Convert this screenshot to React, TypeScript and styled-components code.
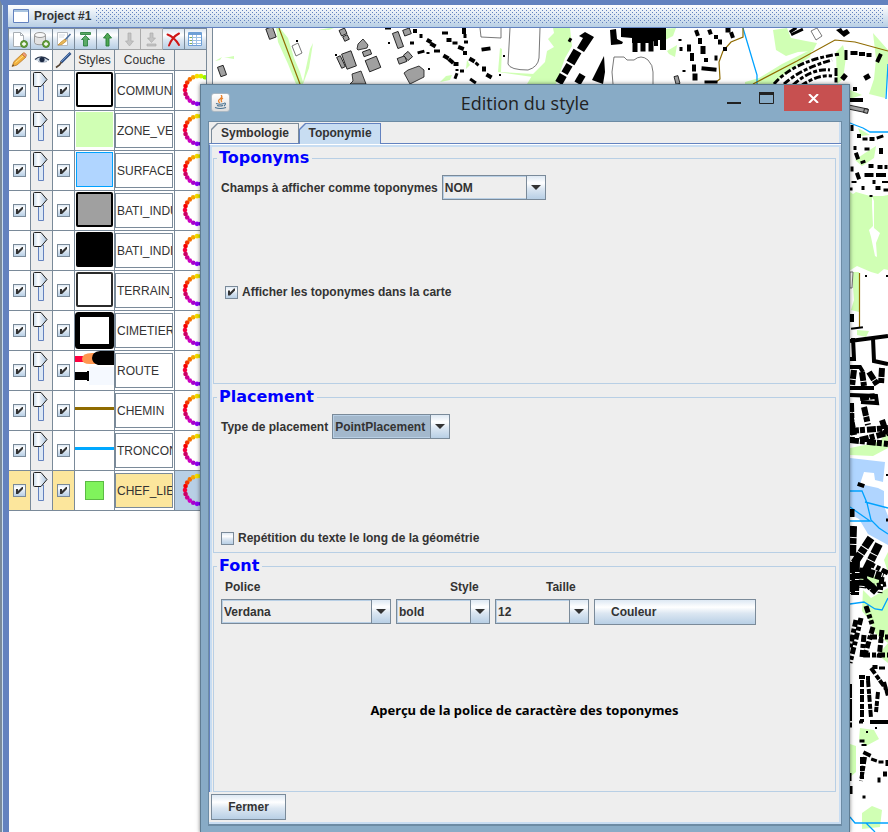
import React from "react";
import styled, { createGlobalStyle } from "styled-components";

const line = "#7a8a99";
const blue = "#6382bf";
const ink = "#333333";
const panel = "#eeeeee";
const metal = "linear-gradient(#dde8f3 0%, #ffffff 30%, #dce7f2 55%, #b8cfe5 100%)";

const GlobalStyle = createGlobalStyle`
  * { box-sizing: border-box; }
  body {
    margin: 0;
    background: ${blue};
    color: ${ink};
    font: 12px/16px "Liberation Sans", Arial, sans-serif;
  }
  button, select, input { font: inherit; color: inherit; margin: 0; }
`;

/* ---------- project window ---------- */

const ProjectWindow = styled.main`
  position: relative;
  display: flex;
  flex-direction: column;
  min-height: 100vh;
  overflow: hidden;
  border-top: 5px solid ${blue};
  border-left: 2px solid ${line};
  background: #ffffff;
  box-shadow: inset 1px 0 #c8ddf2, inset 7px 0 ${blue};
  padding-left: 6px;
`;

const TitleBar = styled.header`
  display: flex;
  align-items: center;
  gap: 5px;
  height: 23px;
  padding: 0 5px;
  background: linear-gradient(#ffffff, #b8cfe5);
  border-bottom: 1px solid ${blue};
`;

const ProjectTitle = styled.h1`
  margin: 0;
  font-size: 12px;
  line-height: 16px;
`;

const Bumps = styled.div`
  flex: 1;
  height: 16px;
  background-image: conic-gradient(from 0deg at 1px 1px, transparent 270deg, ${blue} 0),
    conic-gradient(from 0deg at 1px 1px, transparent 270deg, ${blue} 0);
  background-size: 4px 4px;
  background-position: 0 0, 2px 2px;
`;

const Workspace = styled.div`
  flex: 1;
  display: grid;
  grid-template-columns: 199px 6px minmax(0, 1fr);
`;

const LayerPanel = styled.section`
  min-width: 0;
  overflow: hidden;
`;

const Divider = styled.div`
  background: ${panel};
  border-right: 1px solid ${line};
`;

const MapArea = styled.div`
  position: relative;
  overflow: hidden;
  & > svg { position: absolute; inset: 0; width: 100%; height: 100%; display: block; }
`;

const Toolbar = styled.div`
  display: grid;
  grid-template-columns: repeat(9, 22px);
  border-left: 1px solid ${line};
  height: 22px;
`;

const ToolButton = styled.button`
  display: grid;
  place-items: center;
  padding: 0;
  border: 1px solid ${line};
  border-left: 0;
  background: ${metal};
  &:disabled { background: #e4e4e4; border-color: #aaaaaa; }
`;

const Layers = styled.table`
  table-layout: fixed;
  width: 199px;
  border-collapse: separate;
  border-spacing: 0;
  border-left: 1px solid ${blue};
  th, td { padding: 0; border-right: 1px solid ${line}; border-bottom: 1px solid ${line}; overflow: hidden; }
  th { height: 21px; background: ${panel}; font-weight: normal; }
  td { height: 40px; }
  svg { display: block; }
`;

const HeadIcon = styled.div<{ $white?: boolean }>`
  display: grid;
  place-items: center;
  height: 20px;
  background: ${(p) => (p.$white ? "#ffffff" : "transparent")};
`;

const Cell = styled.td<{ $tone?: "gold" | "blue" | "grey" }>`
  background: ${(p) =>
    p.$tone === "gold" ? "#fce69c" : p.$tone === "blue" ? "#b8cfe5" : p.$tone === "grey" ? panel : "#ffffff"};
`;

const Centered = styled.div`
  display: grid;
  place-items: center;
`;

const LayerName = styled.div<{ $selected?: boolean }>`
  height: 35px;
  margin: 0 1px 0 0;
  padding-left: 1px;
  line-height: 34px;
  overflow: hidden;
  white-space: nowrap;
  border: 1px solid ${line};
  background: ${(p) => (p.$selected ? "#fce69c" : "#ffffff")};
`;

const Check = styled.input.attrs({ type: "checkbox" })`
  appearance: none;
  display: block;
  flex: none;
  width: 13px;
  height: 13px;
  border: 1px solid ${line};
  background: ${metal};
  &:checked::before {
    content: "";
    display: block;
    width: 11px;
    height: 11px;
    background: ${ink};
    clip-path: polygon(2px 4px, 4px 4px, 4px 6px, 8px 2px, 9px 2px, 9px 4px, 4px 9px, 2px 9px);
  }
`;

/* ---------- dialog ---------- */

const Dialog = styled.section`
  position: absolute;
  left: 198px;
  right: 38px;
  top: 79px;
  min-height: calc(100% - 79px);
  padding: 0 7px 7px;
  background: #88abc6;
  border: 1px solid #5f7c92;
  border-bottom: 0;
  box-shadow: 0 0 4px rgba(0, 0, 0, 0.5);
`;

const DialogTitle = styled.header`
  display: grid;
  grid-template-columns: 122px 1fr 122px;
  height: 36px;
`;

const JavaIcon = styled.div`
  display: grid;
  place-items: center;
  width: 19px;
  height: 19px;
  margin: 8px 0 0 3px;
  border: 1px solid #a9b8c4;
  border-radius: 3px;
  background: linear-gradient(#ffffff, #dddddd);
`;

const Heading = styled.h2`
  margin: 0;
  text-align: center;
  font: 18px/36px "Open Sans", "Noto Sans", sans-serif;
  color: #222222;
`;

const WindowButtons = styled.div`
  display: grid;
  grid-template-columns: 28px 36px 58px;
  height: 26px;
`;

const WindowButton = styled.button<{ $close?: boolean }>`
  display: grid;
  place-items: center;
  padding: 0;
  border: 0;
  background: ${(p) => (p.$close ? "#c75050" : "transparent")};
`;

const DialogBody = styled.div`
  background: ${panel};
  border: 1px solid #6c8ba4;
  border-bottom-width: 2px;
  box-shadow: inset -2px -2px #c8ddf2;
  padding: 1px 0 4px;
`;

const Tabs = styled.div`
  display: flex;
  align-items: flex-end;
  height: 21px;
  padding-left: 2px;
  border-bottom: 1px solid ${blue};
`;

const Tab = styled.button<{ $active?: boolean }>`
  position: relative;
  height: ${(p) => (p.$active ? 21 : 20)}px;
  width: ${(p) => (p.$active ? 82 : 88)}px;
  margin-bottom: ${(p) => (p.$active ? -1 : 0)}px;
  padding: 0;
  border: 0;
  font-weight: bold;
  line-height: 19px;
  background: ${(p) => (p.$active ? blue : line)};
  clip-path: polygon(0 6px, 6px 0, 100% 0, 100% 100%, 0 100%);
  z-index: 0;
  &::before {
    content: "";
    position: absolute;
    z-index: -1;
    inset: 1px 1px 0 1px;
    background: ${(p) => (p.$active ? "#c8ddf2" : panel)};
    clip-path: polygon(0 6px, 6px 0, 100% 0, 100% 100%, 0 100%);
  }
`;

const TabPanel = styled.form`
  border-top: 1px solid #ffffff;
  border-left: 1px solid ${blue};
  box-shadow: inset 2px 2px #c8ddf2;
  padding: 4px 5px 0 3px;
`;

const Group = styled.fieldset<{ $tall?: boolean }>`
  display: flex;
  flex-direction: column;
  min-width: 0;
  margin: 0;
  height: ${(p) => (p.$tall ? 235 : 165)}px;
  margin-bottom: 4px;
  padding: 0 7px 7px;
  border: 1px solid #b8cfe5;
`;

const GroupTitle = styled.legend`
  padding: 0 3px 0 2px;
  margin-left: -4px;
  color: #0000ff;
  font: bold 16px/18px "DejaVu Sans", sans-serif;
`;

const Field = styled.div<{ $push?: number; $indent?: number }>`
  display: flex;
  align-items: center;
  gap: 4px;
  font-weight: bold;
  margin-top: ${(p) => p.$push ?? 8}px;
  margin-left: ${(p) => p.$indent ?? 0}px;
`;

const Caption = styled.label`
  white-space: nowrap;
`;

const Combo = styled.span<{ $w: number }>`
  display: inline-grid;
  grid-template-columns: 1fr 20px;
  width: ${(p) => p.$w}px;
  height: 25px;
`;

const Select = styled.select<{ $dark?: boolean }>`
  grid-area: 1 / 1 / 2 / 3;
  appearance: none;
  width: 100%;
  padding: 0 20px 0 2px;
  border: 1px solid ${line};
  border-radius: 0;
  outline: 0;
  font-weight: bold;
  background: ${(p) => (p.$dark ? "#a3b8cc" : panel)};
  box-shadow: inset 1px 1px #b8cfe5, inset 0 -1px #b8cfe5;
`;

const Arrow = styled.span`
  grid-area: 1 / 2;
  display: grid;
  place-items: center;
  border: 1px solid ${line};
  background: ${metal};
  pointer-events: none;
`;

const FontGrid = styled.div`
  display: grid;
  grid-template-columns: 170px 94px 94px 162px;
  column-gap: 5px;
  row-gap: 4px;
  font-weight: bold;
  margin-top: 4px;
`;

const FontLabel = styled.label<{ $pad: number }>`
  padding-left: ${(p) => p.$pad}px;
`;

const PushButton = styled.button<{ $w: number; $left?: boolean }>`
  width: ${(p) => p.$w}px;
  height: 26px;
  padding: 0 16px;
  border: 1px solid ${line};
  background: ${metal};
  font-weight: bold;
  text-align: ${(p) => (p.$left ? "left" : "center")};
`;

const Preview = styled.p`
  flex: 1;
  display: grid;
  place-items: center;
  margin: 0;
  padding-top: 10px;
  color: #000000;
  font: bold 13px/16px "Noto Sans", "Open Sans", sans-serif;
`;

const Footer = styled.footer`
  padding: 0 2px;
  margin-top: -2px;
`;

/* ---------- icons ---------- */

const Plus = () => (
  <g>
    <circle cx="13" cy="13" r="3.5" fill="#6da544" stroke="#3f7a1c" strokeWidth="0.8" />
    <path d="M11 13h4M13 11v4" stroke="#fff" strokeWidth="1.3" />
  </g>
);

const toolIcons: { name: string; off?: boolean; art: React.ReactNode }[] = [
  {
    name: "Nouvelle couche",
    art: (
      <>
        <path d="M2.500 1.500h7l3 3v11h-10z" fill="#fff" stroke="#a9afb5" />
        <path d="M9.500 1.500v3h3" fill="none" stroke="#a9afb5" />
        <Plus />
      </>
    ),
  },
  {
    name: "Ajouter une base",
    art: (
      <>
        <path d="M1.500 4v7.500c0 3 11 3 11 0V4" fill="#e2e2e2" stroke="#999" />
        <ellipse cx="7" cy="4" rx="5.500" ry="2.500" fill="#f8f8f8" stroke="#999" />
        <Plus />
      </>
    ),
  },
  {
    name: "Modifier",
    art: (
      <>
        <path d="M2.500 1.500h10v13h-10z" fill="#fff" stroke="#b3b9c0" />
        <path d="M4 4h6M4 6h5" stroke="#d5dce3" />
        <path d="M15.500 3 10 9" stroke="#4c6f9f" strokeWidth="1.600" />
        <path d="M10 8 6 11l-3 3 4-.5 4.500-3.500z" fill="#e9b95a" stroke="#b67c1d" strokeWidth="0.600" />
      </>
    ),
  },
  { name: "Tout en haut", art: <path d="M3.500 1.500h10v2h-10zM8.500 4.500l4 4h-2V15h-4V8.500h-2z" fill="#5aaa66" stroke="#217a36" strokeWidth="0.800" /> },
  { name: "Monter", art: <path d="M8.500 2 12.500 7h-2.500v8h-3V7H4.500z" fill="#4fa653" stroke="#217a36" strokeWidth="0.900" /> },
  { name: "Descendre", off: true, art: <path d="M8.500 15 4.500 10H7V2h3v8h2.500z" fill="#c4c4c4" stroke="#adadad" strokeWidth="0.700" /> },
  { name: "Tout en bas", off: true, art: <path d="M8.500 11.500 4.500 7H7V2h3v5h2.500zM4 13h9v2H4z" fill="#c4c4c4" stroke="#adadad" strokeWidth="0.700" /> },
  { name: "Supprimer", art: <path d="M2.500 3.500C7 5 11 9 14 14M14 2.500C9 5 6 9 4 14.500" fill="none" stroke="#cf1717" strokeWidth="2" strokeLinecap="round" /> },
  {
    name: "Attributs",
    art: (
      <>
        <path d="M1.500 1.500h13v13h-13z" fill="#fff" stroke="#6d9fd6" />
        <path d="M2 3h12" stroke="#6d9fd6" strokeWidth="2" />
        <path d="M2 6.500h12M2 9.500h12M2 12.500h12M5.500 4v10M9.500 4v10" stroke="#9cc0e4" />
        <path d="M3 6.500h2M3 9.500h2M3 12.500h2" stroke="#7fae55" />
      </>
    ),
  },
];

const Pencil = () => (
  <svg width="17" height="16" viewBox="0 0 17 16">
    <path d="M1 14.500 3 9.500 11 2l3.500 3.500L6 13z" fill="#f2b23e" stroke="#b9772a" strokeWidth="0.800" />
    <path d="m11 2 1-1c1.500-1 4 1.500 3.200 3l-.8 1.500z" fill="#ef9a7d" stroke="#b9772a" strokeWidth="0.700" />
    <path d="M4.500 10.500 12 4" stroke="#ffe38e" />
    <path d="m1 14.500 2-1-.8-1.200z" fill="#333" />
  </svg>
);

const Eye = () => (
  <svg width="16" height="12" viewBox="0 0 16 12">
    <path d="M1 6Q8 0 15 6.500 8 9.500 4 7z" fill="#cfdbe8" />
    <path d="M1 5.500Q7 0 15 6" fill="none" stroke="#2d3a50" strokeWidth="1.300" />
    <path d="M4 7.500Q8 9.500 13 7.500" fill="none" stroke="#8a96a6" strokeWidth="0.800" />
    <circle cx="8" cy="5.500" r="2.600" fill="#1c2a44" />
  </svg>
);

const Brush = () => (
  <svg width="17" height="17" viewBox="0 0 17 17">
    <path d="M15.500 1 6 10.500" stroke="#2c4f86" strokeWidth="2.600" />
    <path d="M14.500 1.500 6 10" stroke="#7ca4d8" strokeWidth="0.800" />
    <path d="m6.500 10-2 3L1 15.500" fill="none" stroke="#544334" strokeWidth="1.600" />
  </svg>
);

const Slider = () => (
  <svg width="21" height="39" viewBox="0 0 21 39" role="img" aria-label="Opacité">
    <defs>
      <linearGradient id="thumb">
        <stop offset="0" stopColor="#c8daea" />
        <stop offset="0.350" stopColor="#fff" />
        <stop offset="1" stopColor="#a9c4df" />
      </linearGradient>
    </defs>
    <path d="M7.500 14h5v15.500h-5z" fill="#dce8f4" stroke={blue} />
    <path d="M2.500 2.500q0-1 1-1h6.500l6 7-6 7H3.500q-1 0-1-1z" fill="url(#thumb)" stroke="#222" />
  </svg>
);

const Ring = () => (
  <svg width="31" height="39" viewBox="0 0 31 39" aria-hidden="true">
    {Array.from({ length: 22 }, (_, i) => {
      const turn = i < 11 ? i : i - 22;
      const a = Math.PI + (turn * Math.PI) / 11;
      return (
        <circle
          key={i}
          cx={24 + 14 * Math.cos(a)}
          cy={19 + 14 * Math.sin(a)}
          r="2.300"
          fill={`hsl(${345 + turn * 14},100%,${turn < 0 && turn > -5 ? 40 : 48}%)`}
        />
      );
    })}
  </svg>
);

const box = (fill: string, stroke: string, w = 1) => (
  <rect x={1 + w / 2} y={1 + w / 2} width={37 - w} height={35 - w} rx={w > 1 ? 1 : 0} fill={fill} stroke={stroke} strokeWidth={w} />
);

const layers: { name: string; art: React.ReactNode; selected?: boolean }[] = [
  { name: "COMMUN", art: box("#fff", "#000", 2) },
  { name: "ZONE_VE", art: box("#d0ffb4", "#d0ffb4") },
  { name: "SURFACE", art: box("#b0d5ff", "#00a2ff") },
  { name: "BATI_INDU", art: box("#a0a0a0", "#000", 2) },
  { name: "BATI_INDI", art: box("#000", "#000", 2) },
  { name: "TERRAIN_", art: box("#fff", "#2b2b2b", 2) },
  { name: "CIMETIER", art: <rect x="2.500" y="3.500" width="34" height="32" rx="1" fill="#fff" stroke="#000" strokeWidth="5" /> },
  {
    name: "ROUTE",
    art: (
      <>
        <rect x="14" y="16" width="25" height="18" fill="#f5f9ff" />
        <path d="M0 5h12v6H0z" fill="#ff0040" />
        <path d="M7 8q0-6 10-6h8v11H15q-8 0-8-5z" fill="#ff964f" />
        <path d="M17 7q0-6 8-7h14v14H23q-6-2-6-7z" fill="#000" />
        <path d="M0 21h12v-1h2v10h-2v-1H0z" fill="#000" />
      </>
    ),
  },
  { name: "CHEMIN", art: <path d="M0 17.500h39" stroke="#8f6b00" strokeWidth="3" /> },
  { name: "TRONCON", art: <path d="M0 17.500h39" stroke="#00a8ff" strokeWidth="3" /> },
  { name: "CHEF_LIE", selected: true, art: <rect x="10.500" y="10.500" width="18" height="18" fill="#80f35c" stroke="#5cba45" /> },
];

/* ---------- map ---------- */

type Block = [number, number, number, number, number?];
const grey: Block[] = [
  [271, 33, 7, 11, -20], [222, 71, 6, 10, -20], [343, 32, 6, 6, -25], [346, 38, 5, 5, -25], [341, 62, 4, 12, -25],
  [349, 60, 10, 16, -20], [367, 53, 8, 5, -20], [373, 64, 12, 12, -22], [398, 40, 6, 16, -20], [407, 32, 7, 6, -20],
  [402, 60, 8, 6, -20], [408, 56, 6, 7, -40], [858, 109, 20, 4, 12], [866, 111, 4, 4, 12], [677, 80, 4, 8, -15],
];
const black: Block[] = [
  [297, 41, 2, 2], [336, 55, 2, 2], [429, 69, 2, 2], [388, 28, 6, 3], [389, 43, 2, 2], [412, 43, 4, 3], [415, 31, 4, 4],
  [421, 36, 3, 4], [421, 52, 7, 3, -15], [428, 53, 3, 2], [429, 41, 5, 4, 30], [433, 45, 6, 4, 30], [437, 51, 6, 3],
  [445, 33, 6, 3], [449, 40, 5, 4], [455, 43, 5, 3], [446, 57, 6, 4, 30], [451, 61, 6, 4, 40], [456, 64, 5, 4],
  [462, 71, 4, 3], [456, 76, 3, 6, 20], [457, 70, 3, 2], [473, 81, 7, 3, 35], [461, 48, 6, 4, 20], [465, 53, 4, 4],
  [466, 42, 4, 3], [465, 36, 3, 4], [464, 31, 4, 6], [472, 60, 6, 4, 30], [477, 64, 4, 3, 40], [484, 69, 4, 5],
  [489, 76, 6, 4, 30], [486, 49, 9, 4, -8], [504, 56, 2, 2], [500, 75, 2, 2],
  [574, 57, 9, 14, 30], [567, 69, 7, 10, 30], [561, 79, 8, 9, 30], [580, 79, 7, 10, 30], [570, 40, 3, 4, 30],
  [635, 46, 5, 12], [643, 46, 5, 11], [651, 46, 5, 11], [656, 42, 4, 8], [663, 45, 6, 10],
  [680, 40, 3, 2], [681, 49, 3, 4], [684, 71, 3, 2], [689, 48, 4, 7], [692, 57, 4, 8], [694, 68, 4, 7], [695, 77, 5, 7],
  [697, 33, 4, 6, -20], [700, 41, 4, 6], [703, 50, 5, 8], [706, 60, 4, 4], [710, 32, 4, 5, -20], [716, 37, 4, 4], [720, 42, 4, 5],
  [725, 49, 4, 4], [716, 58, 3, 5], [709, 69, 15, 4, 5], [711, 82, 13, 3], [728, 30, 5, 5], [732, 35, 4, 6, -20],
  [797, 32, 13, 3, -25], [793, 30, 8, 3, -35], [846, 55, 3, 10], [854, 53, 7, 4], [862, 54, 6, 4], [869, 55, 5, 4],
  [879, 58, 4, 9, 25], [867, 77, 6, 5, -30], [855, 89, 4, 4], [856, 100, 14, 4],
  [836, 72, 3, 8], [836, 80, 3, 5], [844, 77, 5, 6, 40],
  [852, 128, 3, 6], [859, 136, 4, 4], [865, 139, 5, 3], [872, 139, 5, 4], [880, 137, 7, 3, -20], [855, 148, 3, 4],
  [857, 156, 4, 7, -20], [863, 162, 5, 3, -20], [867, 149, 5, 3], [881, 151, 4, 6], [852, 169, 3, 5], [871, 166, 5, 4],
  [880, 167, 5, 4], [886, 167, 3, 4], [858, 176, 4, 7, -20], [869, 175, 9, 4], [881, 175, 10, 4], [854, 182, 5, 2],
  [874, 182, 3, 4], [885, 182, 6, 2], [863, 188, 3, 4], [878, 188, 5, 4], [886, 190, 5, 3], [851, 189, 3, 3], [871, 196, 3, 2],
  [866, 276, 2, 2], [887, 276, 2, 2], [852, 318, 4, 8], [857, 328, 12, 2, -8],
  [861, 485, 7, 4, 20], [852, 513, 5, 8], [887, 475, 2, 2], [887, 520, 2, 3],
  [850, 690, 4, 10], [850, 710, 4, 8], [850, 725, 4, 5], [850, 777, 3, 8], [851, 790, 3, 8],
  [862, 677, 6, 4], [868, 678, 4, 4], [875, 667, 5, 4], [882, 668, 6, 3], [867, 732, 2, 2], [876, 728, 2, 2],
  [862, 741, 5, 3], [864, 745, 5, 2], [867, 754, 8, 4, 25], [874, 760, 6, 3, 20], [881, 762, 5, 3], [887, 763, 3, 6],
  [885, 774, 4, 5], [879, 780, 3, 5], [864, 797, 3, 3], [861, 722, 4, 3], [879, 722, 18, 4],
];
const rows = [
  "M774 84Q795 60 840 54", "M784 84Q802 68 832 60", "M793 85Q812 68 830 70", "M801 86Q818 74 832 76",
];

const MapView = () => (
  <svg viewBox="213 28 675 804" preserveAspectRatio="xMinYMin slice" role="img" aria-label="Carte">
    <g fill="#d0ffb4">
      <path d="M276 28h4l8 10 6 20 6 14 3 10 7-33 3-6-4 25-6 16h-7l-8-20-10-22z" />
      <path d="m215 61 7-4-2 3zm9-3 10-2v3l-6-1zm94-28 17-3 4-1-10 4zm122 52 6-6 6-1-2 5zm27-22 3 5-4 4zM498 72l2-24 2 1-1 23 33 2-1 3z" />
      <path d="M553 28h17l2 18-7 12-9 26h-29l6-10 12-12 2-11 7-4-6-8 6-6z" />
      <path d="m663 29 13-1-3 8-8 4zm4 22 10-6-2 12-6-3zM773 30l14-2 4 10 15 3 11 2-4 8-15 1-12 4-10-6z" />
      <path d="m745 82 14-4 23-14 30-15-2 8-22 14-14 13h-29zm91-30 7-7 3 12-3 22-6 5zm37-19 15 17v22l-3 26-16-4 5-15 2-20zM850 90l12 5-12 4zm8 38 12 7-9 1zm7 25 11-7-2 12-12 8-7-6z" />
      <path d="m850 192 3 2 3-2 14 4h13l5-1v75l-4-1-6 5-7-2-14-6-8 5-7-7zm2 80h7v40l-8-2 3-10zm5 58 12 1-3 6-9-2zM850 448l20-4 10-3 8-10v17l-15 8-23-1z" />
      <path d="m863 590 8 8 17-10v55l-13-10-5-12-8-10zm0-23 10 8 8 5-6 8-15-8zM860 728l14 2 5 9-13 7-7-7zM850 744l6 2v26l-6 5zm12 69 10-7 10 4-2 17-18 2z" />
      <path d="m884 560 4-8v20zm-6 95 10 8v-20z" />
    </g>
    <path d="m872 196 2 5v27l6 5-4 10 1 14-2-1-4-19-2-7 4-4-1-20z" fill="#fff" />
    <path d="m850 458 35 4-2 20-8-2-1-7-10-1-4 12 18 4 6 3v15l6 15v25l-22-12-9-15-9-5z" fill="#b0d5ff" />
    <g fill="none" stroke="#00a2ff" strokeWidth="1.300">
      <path d="m743 28 14 47v9M888 64l-2 35M850 123l5 2 8 3 7 4h18M850 491h12l5 12 4 17 8 8 9 6M865 502l23 6M850 507l20 14h-20M850 604l14-2 11 7 7 1 6-12M850 817l5 6h33M866 823l9 9" />
    </g>
    <g fill="none" stroke="#8f6b00" strokeWidth="1.200">
      <path d="m279 28 21 56M743 28v9l-12 5-8 9-4 11 1 17-4 3M753 84l44-23 38-21 20 2 33 9M859.500 273v54" />
    </g>
    <g fill="#fff" stroke="#555" strokeWidth="0.800">
      <path d="m292 46 6-3 4 10-6 3zM480 28l1 9 20 1V28M510 28l-2 36q2 6 20 6 10-3 11-12l1-30M613 84l-1-12 2-15h10l3 3h7q7-6 14 0 5 5 5 12v12M811 31l6-3 5 8-6 4zM850 272h3l-1 16h-2z" />
    </g>
    <g fill="#a0a0a0" stroke="#111" strokeWidth="0.800">
      {grey.map(([x, y, w, h, r = 0], i) => (
        <rect key={i} x={x - w / 2} y={y - h / 2} width={w} height={h} transform={`rotate(${r} ${x} ${y})`} />
      ))}
      <path d="m357 49 1-5 5-5 5 6-1 3-9 2zM352 74l9-3 5 13h-16l3-3zM404 73l4-3 11-4 5 4v7l-14 7z" />
    </g>
    <g fill="#000">
      {black.map(([x, y, w, h, r = 0], i) => (
        <rect key={i} x={x - w / 2} y={y - h / 2} width={w} height={h} transform={`rotate(${r} ${x} ${y})`} />
      ))}
      <path d="m585 32 9 5-10 15-7-4 6-10-4-2zM604 56l-12 24 11 4 2-12zM610 30l6-1 1 10 6 3-1 2-11 1zM621 28h45v12h-10l-6 3h-18v-5l-11-1zM836 30l5-2 2 3 4-2 3 4-6 4z" />
    </g>
    <g fill="none" stroke="#000">
      {rows.map((d) => <path key={d} d={d} strokeWidth="3" strokeDasharray="7 2 4 2" />)}
      <path strokeWidth="4" d="M850 341l38-5M853 338l1 21h-4M873 338l1 23 14 3M850 367h10l3 5M850 388h24M850 395l26 1 1 7-16-1" />
      <path strokeWidth="6" strokeDasharray="9 1 5 2" d="M854 370l-2 16M862 372l2 14M869 372l9 14M882 368l-1 16M860 398l16-2M850 413l4 22M864 407l4 18M850 431l38-3M860 440l28-7M850 440l38 4M882 420l5 15M851 403l1 40" />
      <path strokeWidth="8" strokeDasharray="11 1 6 1" d="M871 538l-18 27M853 526l-1 30M879 544l-14 28M856 561l-1 34M864 571l19 6M863 580l14 12M851 562v32M864 568l-2 20" />
      <path strokeWidth="5" strokeDasharray="7 2 4 2" d="M888 573l-16-8M882 577l-2 16M868 587l18-3M866 606l6 18M861 618l-11 45M864 635l-2 22M873 627l-8 28M882 630l-3 28M863 655h25M870 637h18M856 620l-6 28" />
      <path strokeWidth="4" strokeDasharray="7 2 5 1" d="M862 680v42M868 680l3 38M871 668l17 24M878 692l-2 20M850 684v42M862 757v24M884 682l4 14M865 757l-4 24" />
    </g>
  </svg>
);

/* ---------- application ---------- */

function Dropdown({ id, value, w, dark }: { id: string; value: string; w: number; dark?: boolean }) {
  return (
    <Combo $w={w}>
      <Select id={id} $dark={dark} defaultValue={value}>
        <option>{value}</option>
      </Select>
      <Arrow>
        <svg width="10" height="5" viewBox="0 0 10 5"><path d="M0 0h10L5 5z" fill={ink} /></svg>
      </Arrow>
    </Combo>
  );
}

export default function App() {
  return (
    <ProjectWindow>
      <GlobalStyle />
      <TitleBar>
        <svg width="16" height="14" viewBox="0 0 16 14">
          <path d="M.5.5h15v13H.5z" fill="#fff" stroke={blue} />
          <path d="M1 2h14" stroke="#a9c4df" strokeWidth="2" />
        </svg>
        <ProjectTitle>Project #1</ProjectTitle>
        <Bumps />
      </TitleBar>
      <Workspace>
        <LayerPanel>
          <Toolbar>
            {toolIcons.map((t) => (
              <ToolButton key={t.name} type="button" aria-label={t.name} disabled={t.off}>
                <svg width="17" height="17" viewBox="0 0 17 17">{t.art}</svg>
              </ToolButton>
            ))}
          </Toolbar>
          <Layers>
            <colgroup>
              <col width="22" /><col width="22" /><col width="22" /><col width="40" /><col width="60" /><col />
            </colgroup>
            <thead>
              <tr>
                <th aria-label="Sélection"><HeadIcon><Pencil /></HeadIcon></th>
                <th aria-label="Visible"><HeadIcon $white><Eye /></HeadIcon></th>
                <th aria-label="Symbole"><HeadIcon><Brush /></HeadIcon></th>
                <th>Styles</th>
                <th>Couche</th>
                <th aria-label="Couleurs" />
              </tr>
            </thead>
            <tbody>
              {layers.map((l, i) => (
                <tr key={i}>
                  <Cell $tone={l.selected ? "gold" : undefined}>
                    <Centered><Check defaultChecked aria-label={`Sélectionner ${l.name}`} /></Centered>
                  </Cell>
                  <Cell $tone="grey"><Slider /></Cell>
                  <Cell $tone={l.selected ? "gold" : undefined}>
                    <Centered><Check defaultChecked aria-label={`Afficher ${l.name}`} /></Centered>
                  </Cell>
                  <Cell><svg width="39" height="39" viewBox="0 0 39 39">{l.art}</svg></Cell>
                  <Cell><LayerName $selected={l.selected}>{l.name}</LayerName></Cell>
                  <Cell $tone={l.selected ? "blue" : undefined}><Ring /></Cell>
                </tr>
              ))}
            </tbody>
          </Layers>
        </LayerPanel>
        <Divider />
        <MapArea><MapView /></MapArea>
      </Workspace>

      <Dialog role="dialog" aria-labelledby="dialog-title">
        <DialogTitle>
          <JavaIcon>
            <svg width="13" height="15" viewBox="0 0 13 15" fill="none">
              <path d="M7 0Q9 2 6 4t0 4M9 3Q6 5 8 7" stroke="#e8802a" strokeWidth="1.300" />
              <path d="M2 8.500q4 1.500 8 0M3 10.500q3 1 6 0M10 8q3 0 0 3M1 12.500q5 2 11 0" stroke="#4a7391" strokeWidth="1.100" />
            </svg>
          </JavaIcon>
          <Heading id="dialog-title">Edition du style</Heading>
          <WindowButtons>
            <WindowButton type="button" aria-label="Réduire">
              <svg width="14" height="12" viewBox="0 0 14 12"><path d="M0 10h14v2H0z" fill="#222" /></svg>
            </WindowButton>
            <WindowButton type="button" aria-label="Agrandir">
              <svg width="15" height="12" viewBox="0 0 15 12"><path d="M.5 1.500h14v10H.5z" fill="none" stroke="#222" /><path d="M0 0h15v3H0z" fill="#222" /></svg>
            </WindowButton>
            <WindowButton type="button" $close aria-label="Fermer la fenêtre">
              <svg width="11" height="9" viewBox="0 0 11 9"><path d="m1 0 9 9M10 0 1 9" stroke="#fff" strokeWidth="2" /></svg>
            </WindowButton>
          </WindowButtons>
        </DialogTitle>
        <DialogBody>
          <Tabs role="tablist">
            <Tab type="button" role="tab" aria-selected="false">Symbologie</Tab>
            <Tab type="button" role="tab" aria-selected="true" $active>Toponymie</Tab>
          </Tabs>
          <TabPanel>
            <Group $tall>
              <GroupTitle>Toponyms</GroupTitle>
              <Field>
                <Caption htmlFor="champ">Champs à afficher comme toponymes</Caption>
                <Dropdown id="champ" value="NOM" w={104} />
              </Field>
              <Field $push={84} $indent={4}>
                <Check id="afficher" defaultChecked />
                <Caption htmlFor="afficher">Afficher les toponymes dans la carte</Caption>
              </Field>
            </Group>
            <Group>
              <GroupTitle>Placement</GroupTitle>
              <Field>
                <Caption htmlFor="placement">Type de placement</Caption>
                <Dropdown id="placement" value="PointPlacement" w={118} dark />
              </Field>
              <Field $push={91}>
                <Check id="repeter" />
                <Caption htmlFor="repeter">Repétition du texte le long de la géométrie</Caption>
              </Field>
            </Group>
            <Group $tall>
              <GroupTitle>Font</GroupTitle>
              <FontGrid>
                <FontLabel htmlFor="police" $pad={4}>Police</FontLabel>
                <FontLabel htmlFor="style" $pad={54}>Style</FontLabel>
                <FontLabel htmlFor="taille" $pad={51}>Taille</FontLabel>
                <span />
                <Dropdown id="police" value="Verdana" w={170} />
                <Dropdown id="style" value="bold" w={94} />
                <Dropdown id="taille" value="12" w={94} />
                <PushButton type="button" $w={162} $left>Couleur</PushButton>
              </FontGrid>
              <Preview>Aperçu de la police de caractère des toponymes</Preview>
            </Group>
          </TabPanel>
          <Footer>
            <PushButton type="button" $w={75}>Fermer</PushButton>
          </Footer>
        </DialogBody>
      </Dialog>
    </ProjectWindow>
  );
}
